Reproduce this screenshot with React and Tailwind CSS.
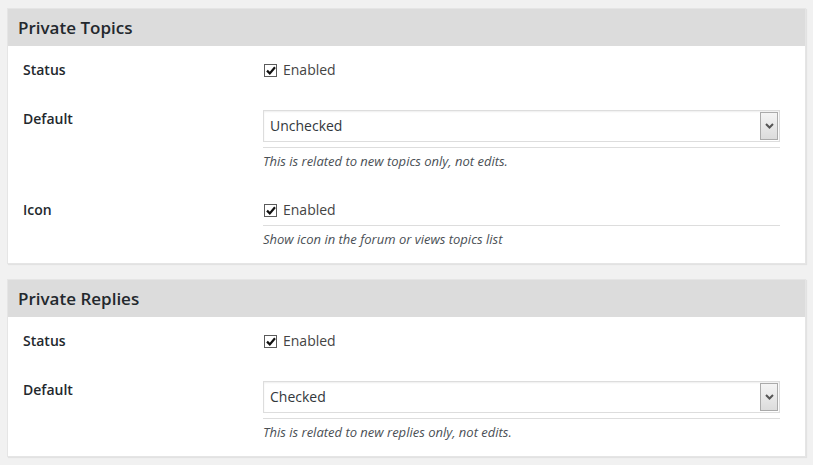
import React from 'react';

const font = { fontFamily: '"Open Sans", "Noto Sans", sans-serif' };

const CheckBox = ({ label }) => (
  <label className="flex items-center h-5 text-[14px] text-[#444]">
    <span className="w-[13px] h-[13px] ml-px mt-px border border-[#5a5a5a] bg-white flex items-center justify-center">
      <svg width="10" height="9" viewBox="0 0 10 9">
        <path d="M1 4.6 L3.8 7.4 L9 1.2" fill="none" stroke="#111" strokeWidth="2.2" />
      </svg>
    </span>
    <span className="ml-[6px] leading-5">{label}</span>
  </label>
);

const Select = ({ value }) => (
  <div className="h-8 mt-[2px] border border-[#ddd] bg-white flex items-stretch shadow-[inset_0_1px_2px_rgba(0,0,0,0.07)]">
    <div className="flex-1 flex items-center pl-[6px] pb-px text-[14px] text-[#32373c]">{value}</div>
    <div className="w-[18px] my-px mr-px border border-[#aaa] bg-gradient-to-b from-[#f4f4f4] to-[#dcdcdc] flex items-center justify-center">
      <svg width="9" height="6" viewBox="0 0 9 6">
        <path d="M1 1 L4.5 4.5 L8 1" fill="none" stroke="#555" strokeWidth="2" />
      </svg>
    </div>
  </div>
);

const Description = ({ children }) => (
  <div className="border-t border-[#ddd] pt-[3px] text-[13px] leading-5 italic text-[#4a4f55]">{children}</div>
);

const Row = ({ label, children, className = '', labelClass = '' }) => (
  <div className={`flex ${className}`}>
    <div className={`w-[240px] text-[14px] leading-5 font-semibold text-[#23282d] ${labelClass}`}>{label}</div>
    <div className="flex-1">{children}</div>
  </div>
);

const Panel = ({ title, children }) => (
  <div className="bg-white border border-[#e5e5e5] shadow-[1px_1px_1px_rgba(0,0,0,0.06)]">
    <div className="h-[37px] bg-[#dcdcdc] flex items-center px-[10px] text-[17px] font-semibold text-[#23282d]">
      {title}
    </div>
    <div className="pl-[15px] pr-[25px] pt-[14px] pb-[14px]">{children}</div>
  </div>
);

export default function App() {
  const sections = [
    {
      title: 'Private Topics',
      defaultValue: 'Unchecked',
      defaultNote: 'This is related to new topics only, not edits.',
      icon: true,
    },
    {
      title: 'Private Replies',
      defaultValue: 'Checked',
      defaultNote: 'This is related to new replies only, not edits.',
      icon: false,
    },
  ];

  return (
    <div className="min-h-screen bg-[#f1f1f1] pt-2 px-[7px] pb-2 flex flex-col gap-[15px]" style={font}>
      {sections.map((s) => (
        <Panel key={s.title} title={s.title}>
          <Row label="Status">
            <CheckBox label="Enabled" />
          </Row>
          <Row label="Default" className="mt-[28px]" labelClass="pt-px">
            <Select value={s.defaultValue} />
            <div className="mt-[5px]">
              <Description>{s.defaultNote}</Description>
            </div>
          </Row>
          {s.icon && (
            <Row label="Icon" className="mt-[29px]">
              <CheckBox label="Enabled" />
              <div className="mt-[5px]">
                <Description>Show icon in the forum or views topics list</Description>
              </div>
            </Row>
          )}
        </Panel>
      ))}
    </div>
  );
}
